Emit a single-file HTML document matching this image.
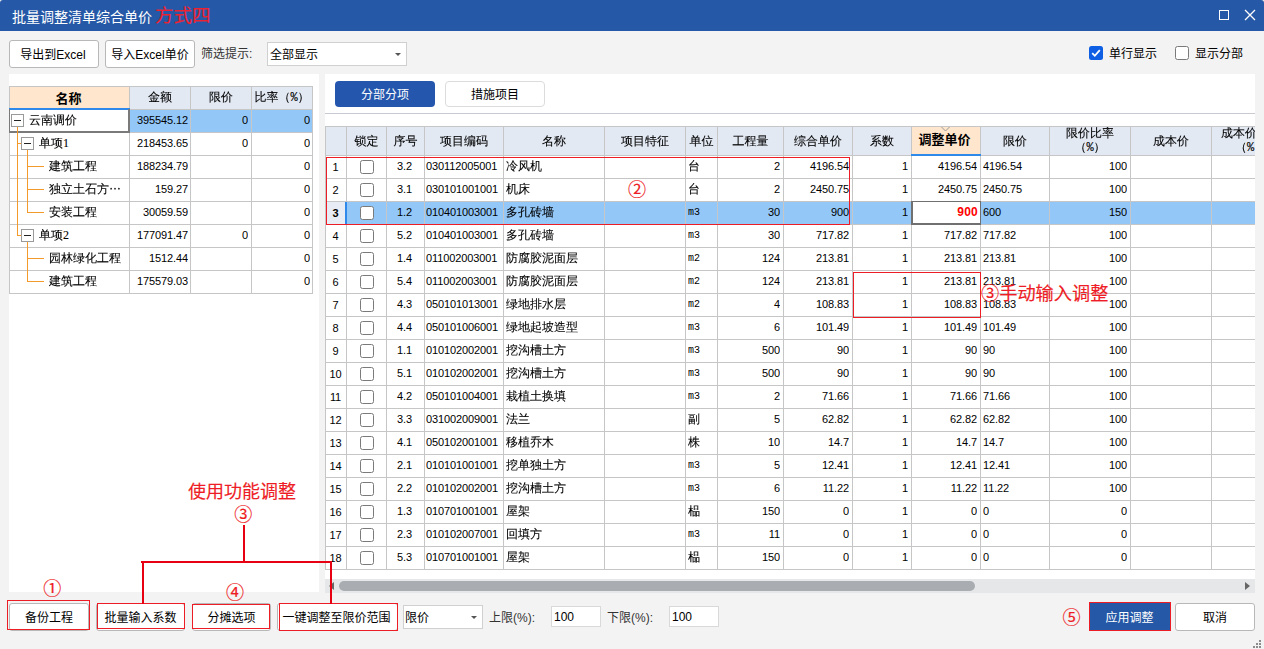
<!DOCTYPE html>
<html lang="zh-CN"><head><meta charset="utf-8"><title>批量调整清单综合单价</title>
<style>
*{box-sizing:border-box;margin:0;padding:0}
html,body{width:1264px;height:649px;overflow:hidden}
body{background:#f3f3f3;position:relative;font-family:"Liberation Sans","Noto Sans CJK SC",sans-serif;font-size:12px;color:#000}
.a{position:absolute}
.ui{font-family:"Liberation Sans","Noto Sans CJK SC",sans-serif;font-size:12px;white-space:nowrap}
.sm{font-family:"Liberation Serif","WenQuanYi Zen Hei",serif;font-size:12px;white-space:nowrap;-webkit-text-stroke:0.1px #000}
.n{font-family:"Liberation Sans",sans-serif;font-size:11px;letter-spacing:-0.117px;white-space:nowrap}
.u{font-family:"Liberation Mono",monospace;font-size:10px;white-space:nowrap}
.hm{font-family:"Liberation Mono","WenQuanYi Zen Hei",monospace}
.e{font-family:"WenQuanYi Zen Hei","Liberation Serif",serif}
.bd{font-family:"Liberation Serif","Noto Sans CJK SC",serif;font-weight:bold;-webkit-text-stroke:0}
#title{left:0;top:0;width:1264px;height:31px;background:#2558a6;border-radius:3px 3px 0 0}
html{background:#d8d8d8}
.btn{background:#fff;border:1px solid #b8b8b8;border-radius:3px;text-align:center;line-height:28px;height:28px}
.sel{background:#fff;border:1px solid #d0d0d0;height:24px;line-height:24px;padding-left:1px}
.inp{background:#fff;border:1px solid #d9d9d9;height:21px;line-height:21px;padding-left:2px}
.panel{background:#fff}
.c{position:absolute;height:23px;line-height:23px;overflow:hidden}
.r{text-align:right}
.ct{text-align:center}
.hl{position:absolute;background:#c6c6c6;height:1px}
.vl{position:absolute;background:#c6c6c6;width:1px}
.hd{position:absolute;background:#e3e9f3;text-align:center;overflow:hidden}
.cb{position:absolute;width:14px;height:14px;border:1px solid #7a7a7a;border-radius:2.5px;background:#fff}
.red{color:#ee1c24;-webkit-text-stroke:0.15px #ee1c24}
.cn{-webkit-text-stroke:0.2px #ee1c24}
.rb{position:absolute;border:1px solid #ee1c24}
.rl{position:absolute;background:#e60012}
.or{position:absolute;background:#f39a2b}
.ex{position:absolute;width:13px;height:13px;border:1px solid #9a9a9a;background:#fff}
.ex:after{content:"";position:absolute;left:2px;top:5px;width:7px;height:1px;background:#222}
</style></head>
<body>
<div id="title" class="a"></div>
<div class="a ui" style="left:12px;top:7px;font-size:14px;line-height:20px;color:#fff">批量调整清单综合单价</div>
<div class="a ui" style="left:155px;top:4px;font-size:18.5px;line-height:24px;color:#ec2230;-webkit-text-stroke:0.15px #ec2230">方式四</div>
<div class="a" style="left:1219px;top:10px;width:10px;height:10px;border:1px solid #fff"></div>
<svg class="a" style="left:1244px;top:9px" width="12" height="12" viewBox="0 0 12 12"><path d="M1 1 L11 11 M11 1 L1 11" stroke="#fff" stroke-width="1.3" fill="none"/></svg>
<div class="a ui btn" style="left:9px;top:40px;width:90px;padding-right:2px">导出到Excel</div>
<div class="a ui btn" style="left:105px;top:40px;width:90px">导入Excel单价</div>
<div class="a ui" style="left:201px;top:42px;line-height:25px;color:#333">筛选提示:</div>
<div class="a ui sel" style="left:267px;top:42px;width:140px;padding-left:2px">全部显示</div>
<div class="a" style="left:395px;top:53px;width:0;height:0;border-left:3px solid transparent;border-right:3px solid transparent;border-top:3px solid #555"></div>
<div class="a" style="left:1089px;top:46px;width:14px;height:14px;border-radius:2.5px;background:#0e5fe3"></div>
<svg class="a" style="left:1089px;top:46px" width="14" height="14" viewBox="0 0 14 14"><path d="M3.2 7.2 L5.8 9.8 L10.8 4.2" stroke="#fff" stroke-width="1.8" fill="none"/></svg>
<div class="a ui" style="left:1109px;top:43px;line-height:22px">单行显示</div>
<div class="cb" style="left:1175px;top:46px"></div>
<div class="a ui" style="left:1195px;top:43px;line-height:22px">显示分部</div>
<div class="a panel" style="left:9px;top:74px;width:310px;height:518px"></div>
<div class="a panel" style="left:325px;top:74px;width:930px;height:518px"></div>
<div class="hd sm bd" style="left:10px;top:87px;width:119px;height:21px;line-height:24px;font-size:13px;padding-right:2px;background:#ffe6cc">名称</div>
<div class="a" style="left:9px;top:108px;width:121px;height:2px;background:#2f89ea"></div>
<div class="hd sm hm" style="left:130px;top:87px;width:60px;height:22px;line-height:22px">金额</div>
<div class="hd sm hm" style="left:191px;top:87px;width:60px;height:22px;line-height:22px">限价</div>
<div class="hd sm hm" style="left:252px;top:87px;width:60px;height:22px;line-height:22px">比率（%）</div>
<div class="a" style="left:130px;top:110px;width:182px;height:22px;background:#93c7f8"></div>
<div class="c sm" style="left:29px;top:109px;width:100px">云南调价</div>
<div class="c n r" style="left:78px;top:109px;width:110px;transform-origin:right center;">395545.12</div>
<div class="c n r" style="left:138px;top:109px;width:110px;transform-origin:right center;">0</div>
<div class="c n r" style="left:200px;top:109px;width:110px;transform-origin:right center;">0</div>
<div class="c sm" style="left:39px;top:132px;width:90px">单项1</div>
<div class="c n r" style="left:78px;top:132px;width:110px;transform-origin:right center;">218453.65</div>
<div class="c n r" style="left:138px;top:132px;width:110px;transform-origin:right center;">0</div>
<div class="c n r" style="left:200px;top:132px;width:110px;transform-origin:right center;">0</div>
<div class="c sm" style="left:49px;top:155px;width:80px">建筑工程</div>
<div class="c n r" style="left:78px;top:155px;width:110px;transform-origin:right center;">188234.79</div>
<div class="c n r" style="left:200px;top:155px;width:110px;transform-origin:right center;">0</div>
<div class="c sm e" style="left:49px;top:178px;width:80px">独立土石方…</div>
<div class="c n r" style="left:78px;top:178px;width:110px;transform-origin:right center;">159.27</div>
<div class="c n r" style="left:200px;top:178px;width:110px;transform-origin:right center;">0</div>
<div class="c sm" style="left:49px;top:201px;width:80px">安装工程</div>
<div class="c n r" style="left:78px;top:201px;width:110px;transform-origin:right center;">30059.59</div>
<div class="c n r" style="left:200px;top:201px;width:110px;transform-origin:right center;">0</div>
<div class="c sm" style="left:39px;top:224px;width:90px">单项2</div>
<div class="c n r" style="left:78px;top:224px;width:110px;transform-origin:right center;">177091.47</div>
<div class="c n r" style="left:138px;top:224px;width:110px;transform-origin:right center;">0</div>
<div class="c n r" style="left:200px;top:224px;width:110px;transform-origin:right center;">0</div>
<div class="c sm" style="left:49px;top:247px;width:80px">园林绿化工程</div>
<div class="c n r" style="left:78px;top:247px;width:110px;transform-origin:right center;">1512.44</div>
<div class="c n r" style="left:200px;top:247px;width:110px;transform-origin:right center;">0</div>
<div class="c sm" style="left:49px;top:270px;width:80px">建筑工程</div>
<div class="c n r" style="left:78px;top:270px;width:110px;transform-origin:right center;">175579.03</div>
<div class="c n r" style="left:200px;top:270px;width:110px;transform-origin:right center;">0</div>
<div class="hl" style="left:9px;top:86px;width:304px"></div>
<div class="hl" style="left:9px;top:109px;width:304px"></div>
<div class="hl" style="left:9px;top:132px;width:304px"></div>
<div class="hl" style="left:9px;top:155px;width:304px"></div>
<div class="hl" style="left:9px;top:178px;width:304px"></div>
<div class="hl" style="left:9px;top:201px;width:304px"></div>
<div class="hl" style="left:9px;top:224px;width:304px"></div>
<div class="hl" style="left:9px;top:247px;width:304px"></div>
<div class="hl" style="left:9px;top:270px;width:304px"></div>
<div class="hl" style="left:9px;top:293px;width:304px"></div>
<div class="vl" style="left:9px;top:86px;height:208px"></div>
<div class="vl" style="left:129px;top:86px;height:208px"></div>
<div class="vl" style="left:190px;top:86px;height:208px"></div>
<div class="vl" style="left:251px;top:86px;height:208px"></div>
<div class="vl" style="left:312px;top:86px;height:208px"></div>
<div class="a" style="left:9px;top:108px;width:121px;height:2px;background:#2f89ea"></div>
<div class="a" style="left:9px;top:109px;width:121px;height:24px;border:1px solid #7a7a7a;border-right-width:2px;border-bottom-width:2px;border-top:0"></div>
<div class="or" style="left:17px;top:127px;width:1px;height:109px"></div>
<div class="or" style="left:17px;top:143px;width:4px;height:1px"></div>
<div class="or" style="left:17px;top:235px;width:4px;height:1px"></div>
<div class="or" style="left:27px;top:150px;width:1px;height:63px"></div>
<div class="or" style="left:27px;top:242px;width:1px;height:40px"></div>
<div class="or" style="left:27px;top:166px;width:17px;height:1px"></div>
<div class="or" style="left:27px;top:189px;width:17px;height:1px"></div>
<div class="or" style="left:27px;top:212px;width:17px;height:1px"></div>
<div class="or" style="left:27px;top:258px;width:17px;height:1px"></div>
<div class="or" style="left:27px;top:281px;width:17px;height:1px"></div>
<div class="ex" style="left:11px;top:114px"></div>
<div class="ex" style="left:21px;top:137px"></div>
<div class="ex" style="left:21px;top:229px"></div>
<div class="a ui" style="left:335px;top:81px;width:100px;height:26px;line-height:29px;border-radius:4px;background:#2356ac;color:#fff;text-align:center">分部分项</div>
<div class="a ui" style="left:445px;top:81px;width:100px;height:26px;line-height:27px;border-radius:4px;background:#fff;border:1px solid #dcdcdc;text-align:center">措施项目</div>
<div class="a" style="left:325px;top:113px;width:930px;height:1px;background:#c9c9d1"></div>
<div class="hd sm" style="left:326px;top:127px;width:20px;height:28px;line-height:28px;"></div>
<div class="hd sm" style="left:347px;top:127px;width:39px;height:28px;line-height:28px;">锁定</div>
<div class="hd sm" style="left:387px;top:127px;width:37px;height:28px;line-height:28px;">序号</div>
<div class="hd sm" style="left:425px;top:127px;width:78px;height:28px;line-height:28px;">项目编码</div>
<div class="hd sm" style="left:504px;top:127px;width:100px;height:28px;line-height:28px;">名称</div>
<div class="hd sm" style="left:605px;top:127px;width:80px;height:28px;line-height:28px;">项目特征</div>
<div class="hd sm" style="left:686px;top:127px;width:31px;height:28px;line-height:28px;">单位</div>
<div class="hd sm" style="left:718px;top:127px;width:65px;height:28px;line-height:28px;">工程量</div>
<div class="hd sm" style="left:784px;top:127px;width:68px;height:28px;line-height:28px;">综合单价</div>
<div class="hd sm" style="left:853px;top:127px;width:58px;height:28px;line-height:28px;">系数</div>
<div class="hd sm bd" style="left:912px;top:127px;width:68px;height:28px;line-height:26px;background:#ffe6cc;font-size:13px;padding-right:3px;">调整单价</div>
<div class="hd sm" style="left:981px;top:127px;width:68px;height:28px;line-height:28px;">限价</div>
<div class="hd sm hm" style="left:1050px;top:127px;width:80px;height:28px;line-height:14px;">限价比率<br>（%）</div>
<div class="hd sm" style="left:1131px;top:127px;width:80px;height:28px;line-height:28px;">成本价</div>
<div class="hd sm hm" style="left:1212px;top:127px;width:43px;height:28px;line-height:14px;text-align:left;padding-left:9px">成本价<br><span style="padding-left:14px">（%</span></div>
<div class="a" style="left:347px;top:202px;width:908px;height:22px;background:#93c7f8"></div>
<div class="a" style="left:326px;top:202px;width:19px;height:22px;background:#e8ecf5"></div>
<div class="c n ct" style="left:305.5px;top:156px;width:60px;transform-origin:center center;">1</div>
<div class="cb" style="left:360px;top:160px"></div>
<div class="c n ct" style="left:374.5px;top:155px;width:60px;transform-origin:center center;">3.2</div>
<div class="c n" style="left:426px;top:155px;width:110px;transform-origin:left center;">030112005001</div>
<div class="c sm" style="left:506px;top:155px;width:98px">冷风机</div>
<div class="c sm" style="left:688px;top:155px;width:29px">台</div>
<div class="c n r" style="left:670px;top:155px;width:110px;transform-origin:right center;">2</div>
<div class="c n r" style="left:739px;top:155px;width:110px;transform-origin:right center;">4196.54</div>
<div class="c n r" style="left:798px;top:155px;width:110px;transform-origin:right center;">1</div>
<div class="c n r" style="left:867px;top:155px;width:110px;transform-origin:right center;">4196.54</div>
<div class="c n" style="left:983px;top:155px;width:110px;transform-origin:left center;">4196.54</div>
<div class="c n r" style="left:1017px;top:155px;width:110px;transform-origin:right center;">100</div>
<div class="c n ct" style="left:305.5px;top:179px;width:60px;transform-origin:center center;">2</div>
<div class="cb" style="left:360px;top:183px"></div>
<div class="c n ct" style="left:374.5px;top:178px;width:60px;transform-origin:center center;">3.1</div>
<div class="c n" style="left:426px;top:178px;width:110px;transform-origin:left center;">030101001001</div>
<div class="c sm" style="left:506px;top:178px;width:98px">机床</div>
<div class="c sm" style="left:688px;top:178px;width:29px">台</div>
<div class="c n r" style="left:670px;top:178px;width:110px;transform-origin:right center;">2</div>
<div class="c n r" style="left:739px;top:178px;width:110px;transform-origin:right center;">2450.75</div>
<div class="c n r" style="left:798px;top:178px;width:110px;transform-origin:right center;">1</div>
<div class="c n r" style="left:867px;top:178px;width:110px;transform-origin:right center;">2450.75</div>
<div class="c n" style="left:983px;top:178px;width:110px;transform-origin:left center;">2450.75</div>
<div class="c n r" style="left:1017px;top:178px;width:110px;transform-origin:right center;">100</div>
<div class="c n ct" style="left:305.5px;top:202px;width:60px;transform-origin:center center;font-weight:bold;">3</div>
<div class="cb" style="left:360px;top:206px"></div>
<div class="c n ct" style="left:374.5px;top:201px;width:60px;transform-origin:center center;">1.2</div>
<div class="c n" style="left:426px;top:201px;width:110px;transform-origin:left center;">010401003001</div>
<div class="c sm" style="left:506px;top:201px;width:98px">多孔砖墙</div>
<div class="c u" style="left:688px;top:201px;width:29px">m3</div>
<div class="c n r" style="left:670px;top:201px;width:110px;transform-origin:right center;">30</div>
<div class="c n r" style="left:739px;top:201px;width:110px;transform-origin:right center;">900</div>
<div class="c n r" style="left:798px;top:201px;width:110px;transform-origin:right center;">1</div>
<div class="a" style="left:911px;top:201px;width:70px;height:24px;background:#fff;border:1px solid #707070;border-bottom-width:2px;border-left-width:2px"></div>
<div class="c r" style="left:912px;top:201px;width:66px;font-family:'Liberation Sans',sans-serif;font-weight:bold;font-size:12px;letter-spacing:0.25px;color:#ff0000">900</div>
<div class="c n" style="left:983px;top:201px;width:110px;transform-origin:left center;">600</div>
<div class="c n r" style="left:1017px;top:201px;width:110px;transform-origin:right center;">150</div>
<div class="c n ct" style="left:305.5px;top:225px;width:60px;transform-origin:center center;">4</div>
<div class="cb" style="left:360px;top:229px"></div>
<div class="c n ct" style="left:374.5px;top:224px;width:60px;transform-origin:center center;">5.2</div>
<div class="c n" style="left:426px;top:224px;width:110px;transform-origin:left center;">010401003001</div>
<div class="c sm" style="left:506px;top:224px;width:98px">多孔砖墙</div>
<div class="c u" style="left:688px;top:224px;width:29px">m3</div>
<div class="c n r" style="left:670px;top:224px;width:110px;transform-origin:right center;">30</div>
<div class="c n r" style="left:739px;top:224px;width:110px;transform-origin:right center;">717.82</div>
<div class="c n r" style="left:798px;top:224px;width:110px;transform-origin:right center;">1</div>
<div class="c n r" style="left:867px;top:224px;width:110px;transform-origin:right center;">717.82</div>
<div class="c n" style="left:983px;top:224px;width:110px;transform-origin:left center;">717.82</div>
<div class="c n r" style="left:1017px;top:224px;width:110px;transform-origin:right center;">100</div>
<div class="c n ct" style="left:305.5px;top:248px;width:60px;transform-origin:center center;">5</div>
<div class="cb" style="left:360px;top:252px"></div>
<div class="c n ct" style="left:374.5px;top:247px;width:60px;transform-origin:center center;">1.4</div>
<div class="c n" style="left:426px;top:247px;width:110px;transform-origin:left center;">011002003001</div>
<div class="c sm" style="left:506px;top:247px;width:98px">防腐胶泥面层</div>
<div class="c u" style="left:688px;top:247px;width:29px">m2</div>
<div class="c n r" style="left:670px;top:247px;width:110px;transform-origin:right center;">124</div>
<div class="c n r" style="left:739px;top:247px;width:110px;transform-origin:right center;">213.81</div>
<div class="c n r" style="left:798px;top:247px;width:110px;transform-origin:right center;">1</div>
<div class="c n r" style="left:867px;top:247px;width:110px;transform-origin:right center;">213.81</div>
<div class="c n" style="left:983px;top:247px;width:110px;transform-origin:left center;">213.81</div>
<div class="c n r" style="left:1017px;top:247px;width:110px;transform-origin:right center;">100</div>
<div class="c n ct" style="left:305.5px;top:271px;width:60px;transform-origin:center center;">6</div>
<div class="cb" style="left:360px;top:275px"></div>
<div class="c n ct" style="left:374.5px;top:270px;width:60px;transform-origin:center center;">5.4</div>
<div class="c n" style="left:426px;top:270px;width:110px;transform-origin:left center;">011002003001</div>
<div class="c sm" style="left:506px;top:270px;width:98px">防腐胶泥面层</div>
<div class="c u" style="left:688px;top:270px;width:29px">m2</div>
<div class="c n r" style="left:670px;top:270px;width:110px;transform-origin:right center;">124</div>
<div class="c n r" style="left:739px;top:270px;width:110px;transform-origin:right center;">213.81</div>
<div class="c n r" style="left:798px;top:270px;width:110px;transform-origin:right center;">1</div>
<div class="c n r" style="left:867px;top:270px;width:110px;transform-origin:right center;">213.81</div>
<div class="c n" style="left:983px;top:270px;width:110px;transform-origin:left center;">213.81</div>
<div class="c n r" style="left:1017px;top:270px;width:110px;transform-origin:right center;">100</div>
<div class="c n ct" style="left:305.5px;top:294px;width:60px;transform-origin:center center;">7</div>
<div class="cb" style="left:360px;top:298px"></div>
<div class="c n ct" style="left:374.5px;top:293px;width:60px;transform-origin:center center;">4.3</div>
<div class="c n" style="left:426px;top:293px;width:110px;transform-origin:left center;">050101013001</div>
<div class="c sm" style="left:506px;top:293px;width:98px">绿地排水层</div>
<div class="c u" style="left:688px;top:293px;width:29px">m2</div>
<div class="c n r" style="left:670px;top:293px;width:110px;transform-origin:right center;">4</div>
<div class="c n r" style="left:739px;top:293px;width:110px;transform-origin:right center;">108.83</div>
<div class="c n r" style="left:798px;top:293px;width:110px;transform-origin:right center;">1</div>
<div class="c n r" style="left:867px;top:293px;width:110px;transform-origin:right center;">108.83</div>
<div class="c n" style="left:983px;top:293px;width:110px;transform-origin:left center;">108.83</div>
<div class="c n r" style="left:1017px;top:293px;width:110px;transform-origin:right center;">100</div>
<div class="c n ct" style="left:305.5px;top:317px;width:60px;transform-origin:center center;">8</div>
<div class="cb" style="left:360px;top:321px"></div>
<div class="c n ct" style="left:374.5px;top:316px;width:60px;transform-origin:center center;">4.4</div>
<div class="c n" style="left:426px;top:316px;width:110px;transform-origin:left center;">050101006001</div>
<div class="c sm" style="left:506px;top:316px;width:98px">绿地起坡造型</div>
<div class="c u" style="left:688px;top:316px;width:29px">m3</div>
<div class="c n r" style="left:670px;top:316px;width:110px;transform-origin:right center;">6</div>
<div class="c n r" style="left:739px;top:316px;width:110px;transform-origin:right center;">101.49</div>
<div class="c n r" style="left:798px;top:316px;width:110px;transform-origin:right center;">1</div>
<div class="c n r" style="left:867px;top:316px;width:110px;transform-origin:right center;">101.49</div>
<div class="c n" style="left:983px;top:316px;width:110px;transform-origin:left center;">101.49</div>
<div class="c n r" style="left:1017px;top:316px;width:110px;transform-origin:right center;">100</div>
<div class="c n ct" style="left:305.5px;top:340px;width:60px;transform-origin:center center;">9</div>
<div class="cb" style="left:360px;top:344px"></div>
<div class="c n ct" style="left:374.5px;top:339px;width:60px;transform-origin:center center;">1.1</div>
<div class="c n" style="left:426px;top:339px;width:110px;transform-origin:left center;">010102002001</div>
<div class="c sm" style="left:506px;top:339px;width:98px">挖沟槽土方</div>
<div class="c u" style="left:688px;top:339px;width:29px">m3</div>
<div class="c n r" style="left:670px;top:339px;width:110px;transform-origin:right center;">500</div>
<div class="c n r" style="left:739px;top:339px;width:110px;transform-origin:right center;">90</div>
<div class="c n r" style="left:798px;top:339px;width:110px;transform-origin:right center;">1</div>
<div class="c n r" style="left:867px;top:339px;width:110px;transform-origin:right center;">90</div>
<div class="c n" style="left:983px;top:339px;width:110px;transform-origin:left center;">90</div>
<div class="c n r" style="left:1017px;top:339px;width:110px;transform-origin:right center;">100</div>
<div class="c n ct" style="left:305.5px;top:363px;width:60px;transform-origin:center center;">10</div>
<div class="cb" style="left:360px;top:367px"></div>
<div class="c n ct" style="left:374.5px;top:362px;width:60px;transform-origin:center center;">5.1</div>
<div class="c n" style="left:426px;top:362px;width:110px;transform-origin:left center;">010102002001</div>
<div class="c sm" style="left:506px;top:362px;width:98px">挖沟槽土方</div>
<div class="c u" style="left:688px;top:362px;width:29px">m3</div>
<div class="c n r" style="left:670px;top:362px;width:110px;transform-origin:right center;">500</div>
<div class="c n r" style="left:739px;top:362px;width:110px;transform-origin:right center;">90</div>
<div class="c n r" style="left:798px;top:362px;width:110px;transform-origin:right center;">1</div>
<div class="c n r" style="left:867px;top:362px;width:110px;transform-origin:right center;">90</div>
<div class="c n" style="left:983px;top:362px;width:110px;transform-origin:left center;">90</div>
<div class="c n r" style="left:1017px;top:362px;width:110px;transform-origin:right center;">100</div>
<div class="c n ct" style="left:305.5px;top:386px;width:60px;transform-origin:center center;">11</div>
<div class="cb" style="left:360px;top:390px"></div>
<div class="c n ct" style="left:374.5px;top:385px;width:60px;transform-origin:center center;">4.2</div>
<div class="c n" style="left:426px;top:385px;width:110px;transform-origin:left center;">050101004001</div>
<div class="c sm" style="left:506px;top:385px;width:98px">栽植土换填</div>
<div class="c u" style="left:688px;top:385px;width:29px">m3</div>
<div class="c n r" style="left:670px;top:385px;width:110px;transform-origin:right center;">2</div>
<div class="c n r" style="left:739px;top:385px;width:110px;transform-origin:right center;">71.66</div>
<div class="c n r" style="left:798px;top:385px;width:110px;transform-origin:right center;">1</div>
<div class="c n r" style="left:867px;top:385px;width:110px;transform-origin:right center;">71.66</div>
<div class="c n" style="left:983px;top:385px;width:110px;transform-origin:left center;">71.66</div>
<div class="c n r" style="left:1017px;top:385px;width:110px;transform-origin:right center;">100</div>
<div class="c n ct" style="left:305.5px;top:409px;width:60px;transform-origin:center center;">12</div>
<div class="cb" style="left:360px;top:413px"></div>
<div class="c n ct" style="left:374.5px;top:408px;width:60px;transform-origin:center center;">3.3</div>
<div class="c n" style="left:426px;top:408px;width:110px;transform-origin:left center;">031002009001</div>
<div class="c sm" style="left:506px;top:408px;width:98px">法兰</div>
<div class="c sm" style="left:688px;top:408px;width:29px">副</div>
<div class="c n r" style="left:670px;top:408px;width:110px;transform-origin:right center;">5</div>
<div class="c n r" style="left:739px;top:408px;width:110px;transform-origin:right center;">62.82</div>
<div class="c n r" style="left:798px;top:408px;width:110px;transform-origin:right center;">1</div>
<div class="c n r" style="left:867px;top:408px;width:110px;transform-origin:right center;">62.82</div>
<div class="c n" style="left:983px;top:408px;width:110px;transform-origin:left center;">62.82</div>
<div class="c n r" style="left:1017px;top:408px;width:110px;transform-origin:right center;">100</div>
<div class="c n ct" style="left:305.5px;top:432px;width:60px;transform-origin:center center;">13</div>
<div class="cb" style="left:360px;top:436px"></div>
<div class="c n ct" style="left:374.5px;top:431px;width:60px;transform-origin:center center;">4.1</div>
<div class="c n" style="left:426px;top:431px;width:110px;transform-origin:left center;">050102001001</div>
<div class="c sm" style="left:506px;top:431px;width:98px">移植乔木</div>
<div class="c sm" style="left:688px;top:431px;width:29px">株</div>
<div class="c n r" style="left:670px;top:431px;width:110px;transform-origin:right center;">10</div>
<div class="c n r" style="left:739px;top:431px;width:110px;transform-origin:right center;">14.7</div>
<div class="c n r" style="left:798px;top:431px;width:110px;transform-origin:right center;">1</div>
<div class="c n r" style="left:867px;top:431px;width:110px;transform-origin:right center;">14.7</div>
<div class="c n" style="left:983px;top:431px;width:110px;transform-origin:left center;">14.7</div>
<div class="c n r" style="left:1017px;top:431px;width:110px;transform-origin:right center;">100</div>
<div class="c n ct" style="left:305.5px;top:455px;width:60px;transform-origin:center center;">14</div>
<div class="cb" style="left:360px;top:459px"></div>
<div class="c n ct" style="left:374.5px;top:454px;width:60px;transform-origin:center center;">2.1</div>
<div class="c n" style="left:426px;top:454px;width:110px;transform-origin:left center;">010101001001</div>
<div class="c sm" style="left:506px;top:454px;width:98px">挖单独土方</div>
<div class="c u" style="left:688px;top:454px;width:29px">m3</div>
<div class="c n r" style="left:670px;top:454px;width:110px;transform-origin:right center;">5</div>
<div class="c n r" style="left:739px;top:454px;width:110px;transform-origin:right center;">12.41</div>
<div class="c n r" style="left:798px;top:454px;width:110px;transform-origin:right center;">1</div>
<div class="c n r" style="left:867px;top:454px;width:110px;transform-origin:right center;">12.41</div>
<div class="c n" style="left:983px;top:454px;width:110px;transform-origin:left center;">12.41</div>
<div class="c n r" style="left:1017px;top:454px;width:110px;transform-origin:right center;">100</div>
<div class="c n ct" style="left:305.5px;top:478px;width:60px;transform-origin:center center;">15</div>
<div class="cb" style="left:360px;top:482px"></div>
<div class="c n ct" style="left:374.5px;top:477px;width:60px;transform-origin:center center;">2.2</div>
<div class="c n" style="left:426px;top:477px;width:110px;transform-origin:left center;">010102002001</div>
<div class="c sm" style="left:506px;top:477px;width:98px">挖沟槽土方</div>
<div class="c u" style="left:688px;top:477px;width:29px">m3</div>
<div class="c n r" style="left:670px;top:477px;width:110px;transform-origin:right center;">6</div>
<div class="c n r" style="left:739px;top:477px;width:110px;transform-origin:right center;">11.22</div>
<div class="c n r" style="left:798px;top:477px;width:110px;transform-origin:right center;">1</div>
<div class="c n r" style="left:867px;top:477px;width:110px;transform-origin:right center;">11.22</div>
<div class="c n" style="left:983px;top:477px;width:110px;transform-origin:left center;">11.22</div>
<div class="c n r" style="left:1017px;top:477px;width:110px;transform-origin:right center;">100</div>
<div class="c n ct" style="left:305.5px;top:501px;width:60px;transform-origin:center center;">16</div>
<div class="cb" style="left:360px;top:505px"></div>
<div class="c n ct" style="left:374.5px;top:500px;width:60px;transform-origin:center center;">1.3</div>
<div class="c n" style="left:426px;top:500px;width:110px;transform-origin:left center;">010701001001</div>
<div class="c sm" style="left:506px;top:500px;width:98px">屋架</div>
<div class="c sm" style="left:688px;top:500px;width:29px">榀</div>
<div class="c n r" style="left:670px;top:500px;width:110px;transform-origin:right center;">150</div>
<div class="c n r" style="left:739px;top:500px;width:110px;transform-origin:right center;">0</div>
<div class="c n r" style="left:798px;top:500px;width:110px;transform-origin:right center;">1</div>
<div class="c n r" style="left:867px;top:500px;width:110px;transform-origin:right center;">0</div>
<div class="c n" style="left:983px;top:500px;width:110px;transform-origin:left center;">0</div>
<div class="c n r" style="left:1017px;top:500px;width:110px;transform-origin:right center;">0</div>
<div class="c n ct" style="left:305.5px;top:524px;width:60px;transform-origin:center center;">17</div>
<div class="cb" style="left:360px;top:528px"></div>
<div class="c n ct" style="left:374.5px;top:523px;width:60px;transform-origin:center center;">2.3</div>
<div class="c n" style="left:426px;top:523px;width:110px;transform-origin:left center;">010102007001</div>
<div class="c sm" style="left:506px;top:523px;width:98px">回填方</div>
<div class="c u" style="left:688px;top:523px;width:29px">m3</div>
<div class="c n r" style="left:670px;top:523px;width:110px;transform-origin:right center;">11</div>
<div class="c n r" style="left:739px;top:523px;width:110px;transform-origin:right center;">0</div>
<div class="c n r" style="left:798px;top:523px;width:110px;transform-origin:right center;">1</div>
<div class="c n r" style="left:867px;top:523px;width:110px;transform-origin:right center;">0</div>
<div class="c n" style="left:983px;top:523px;width:110px;transform-origin:left center;">0</div>
<div class="c n r" style="left:1017px;top:523px;width:110px;transform-origin:right center;">0</div>
<div class="c n ct" style="left:305.5px;top:547px;width:60px;transform-origin:center center;">18</div>
<div class="cb" style="left:360px;top:551px"></div>
<div class="c n ct" style="left:374.5px;top:546px;width:60px;transform-origin:center center;">5.3</div>
<div class="c n" style="left:426px;top:546px;width:110px;transform-origin:left center;">010701001001</div>
<div class="c sm" style="left:506px;top:546px;width:98px">屋架</div>
<div class="c sm" style="left:688px;top:546px;width:29px">榀</div>
<div class="c n r" style="left:670px;top:546px;width:110px;transform-origin:right center;">150</div>
<div class="c n r" style="left:739px;top:546px;width:110px;transform-origin:right center;">0</div>
<div class="c n r" style="left:798px;top:546px;width:110px;transform-origin:right center;">1</div>
<div class="c n r" style="left:867px;top:546px;width:110px;transform-origin:right center;">0</div>
<div class="c n" style="left:983px;top:546px;width:110px;transform-origin:left center;">0</div>
<div class="c n r" style="left:1017px;top:546px;width:110px;transform-origin:right center;">0</div>
<div class="hl" style="left:325px;top:126px;width:930px"></div>
<div class="hl" style="left:325px;top:155px;width:930px"></div>
<div class="hl" style="left:325px;top:178px;width:930px"></div>
<div class="hl" style="left:325px;top:201px;width:930px"></div>
<div class="hl" style="left:325px;top:224px;width:930px"></div>
<div class="hl" style="left:325px;top:247px;width:930px"></div>
<div class="hl" style="left:325px;top:270px;width:930px"></div>
<div class="hl" style="left:325px;top:293px;width:930px"></div>
<div class="hl" style="left:325px;top:316px;width:930px"></div>
<div class="hl" style="left:325px;top:339px;width:930px"></div>
<div class="hl" style="left:325px;top:362px;width:930px"></div>
<div class="hl" style="left:325px;top:385px;width:930px"></div>
<div class="hl" style="left:325px;top:408px;width:930px"></div>
<div class="hl" style="left:325px;top:431px;width:930px"></div>
<div class="hl" style="left:325px;top:454px;width:930px"></div>
<div class="hl" style="left:325px;top:477px;width:930px"></div>
<div class="hl" style="left:325px;top:500px;width:930px"></div>
<div class="hl" style="left:325px;top:523px;width:930px"></div>
<div class="hl" style="left:325px;top:546px;width:930px"></div>
<div class="hl" style="left:325px;top:569px;width:930px"></div>
<div class="vl" style="left:325px;top:126px;height:444px"></div>
<div class="vl" style="left:346px;top:126px;height:444px"></div>
<div class="vl" style="left:386px;top:126px;height:444px"></div>
<div class="vl" style="left:424px;top:126px;height:444px"></div>
<div class="vl" style="left:503px;top:126px;height:444px"></div>
<div class="vl" style="left:604px;top:126px;height:444px"></div>
<div class="vl" style="left:685px;top:126px;height:444px"></div>
<div class="vl" style="left:717px;top:126px;height:444px"></div>
<div class="vl" style="left:783px;top:126px;height:444px"></div>
<div class="vl" style="left:852px;top:126px;height:444px"></div>
<div class="vl" style="left:911px;top:126px;height:444px"></div>
<div class="vl" style="left:980px;top:126px;height:444px"></div>
<div class="vl" style="left:1049px;top:126px;height:444px"></div>
<div class="vl" style="left:1130px;top:126px;height:444px"></div>
<div class="vl" style="left:1211px;top:126px;height:444px"></div>
<div class="a" style="left:911px;top:154px;width:70px;height:2px;background:#2f89ea"></div>
<div class="a" style="left:345px;top:202px;width:2px;height:22px;background:#2f89ea"></div>
<div class="a" style="left:911px;top:201px;width:70px;height:24px;border:1px solid #707070;border-bottom-width:2px;border-left-width:2px"></div>
<svg class="a" style="left:941px;top:127px" width="9" height="5" viewBox="0 0 9 5"><path d="M0.5 0 L4.5 4 L8.5 0" stroke="#9a9a9a" stroke-width="1" fill="none"/></svg>
<div class="a" style="left:325px;top:579px;width:930px;height:14px;background:#e6e7e9"></div>
<div class="a" style="left:339px;top:581px;width:636px;height:10px;border-radius:5px;background:#a9adb2"></div>
<div class="a" style="left:329px;top:582px;width:0;height:0;border-top:4px solid transparent;border-bottom:4px solid transparent;border-right:5px solid #666"></div>
<div class="a" style="left:1245px;top:582px;width:0;height:0;border-top:4px solid transparent;border-bottom:4px solid transparent;border-left:5px solid #666"></div>
<div class="a ui btn" style="left:9px;top:603px;width:80px">备份工程</div>
<div class="a ui btn" style="left:96px;top:603px;width:89px">批量输入系数</div>
<div class="a ui btn" style="left:192px;top:603px;width:79px">分摊选项</div>
<div class="a ui btn" style="left:277px;top:603px;width:121px;padding-right:2px">一键调整至限价范围</div>
<div class="a ui sel" style="left:403px;top:605px;width:80px">限价</div>
<div class="a" style="left:471px;top:616px;width:0;height:0;border-left:3px solid transparent;border-right:3px solid transparent;border-top:3px solid #555"></div>
<div class="a ui" style="left:489px;top:607px;line-height:22px;color:#333">上限(%):</div>
<div class="a ui inp" style="left:551px;top:606px;width:50px">100</div>
<div class="a ui" style="left:607px;top:607px;line-height:22px;color:#333">下限(%):</div>
<div class="a ui inp" style="left:669px;top:606px;width:50px">100</div>
<div class="a ui" style="left:1089px;top:603px;width:81px;height:28px;line-height:31px;background:#2558a6;color:#fff;text-align:center">应用调整</div>
<div class="a ui btn" style="left:1175px;top:603px;width:80px">取消</div>
<div class="rb" style="left:7px;top:600px;width:83px;height:30px"></div>
<div class="rb" style="left:97px;top:603px;width:88px;height:26px"></div>
<div class="rb" style="left:192px;top:604px;width:78px;height:25px"></div>
<div class="rb" style="left:279px;top:603px;width:119px;height:28px"></div>
<div class="rb" style="left:1089px;top:602px;width:82px;height:29px"></div>
<div class="rb" style="left:326px;top:157px;width:524px;height:68px"></div>
<div class="rb" style="left:853px;top:272px;width:128px;height:46px"></div>
<div class="rl" style="left:141px;top:561px;width:191px;height:2px"></div>
<div class="rl" style="left:142px;top:561px;width:2px;height:43px"></div>
<div class="rl" style="left:330px;top:561px;width:2px;height:43px"></div>
<div class="rl" style="left:243px;top:525px;width:2px;height:37px"></div>
<div class="a ui red cn" style="left:43.2px;top:577.2px;font-size:18px;line-height:24px">①</div>
<div class="a ui red cn" style="left:628px;top:178.1px;font-size:18px;line-height:24px">②</div>
<div class="a ui red cn" style="left:234.2px;top:502.5px;font-size:18px;line-height:24px">③</div>
<div class="a ui red cn" style="left:226.1px;top:581.1px;font-size:18px;line-height:24px">④</div>
<div class="a ui red cn" style="left:1062.5px;top:606.2px;font-size:18px;line-height:24px">⑤</div>
<div class="a ui red" style="left:188px;top:480px;font-size:18px;line-height:24px">使用功能调整</div>
<div class="a ui red" style="left:981px;top:282px;font-size:18.2px;line-height:24px">③手动输入调整</div>
<svg class="a" style="left:1253px;top:640px" width="8" height="8" viewBox="0 0 8 8"><g fill="#8c8c8c"><rect x="6" y="0" width="2" height="2"/><rect x="3" y="3" width="2" height="2"/><rect x="6" y="3" width="2" height="2"/><rect x="0" y="6" width="2" height="2"/><rect x="3" y="6" width="2" height="2"/><rect x="6" y="6" width="2" height="2"/></g></svg>
</body></html>
